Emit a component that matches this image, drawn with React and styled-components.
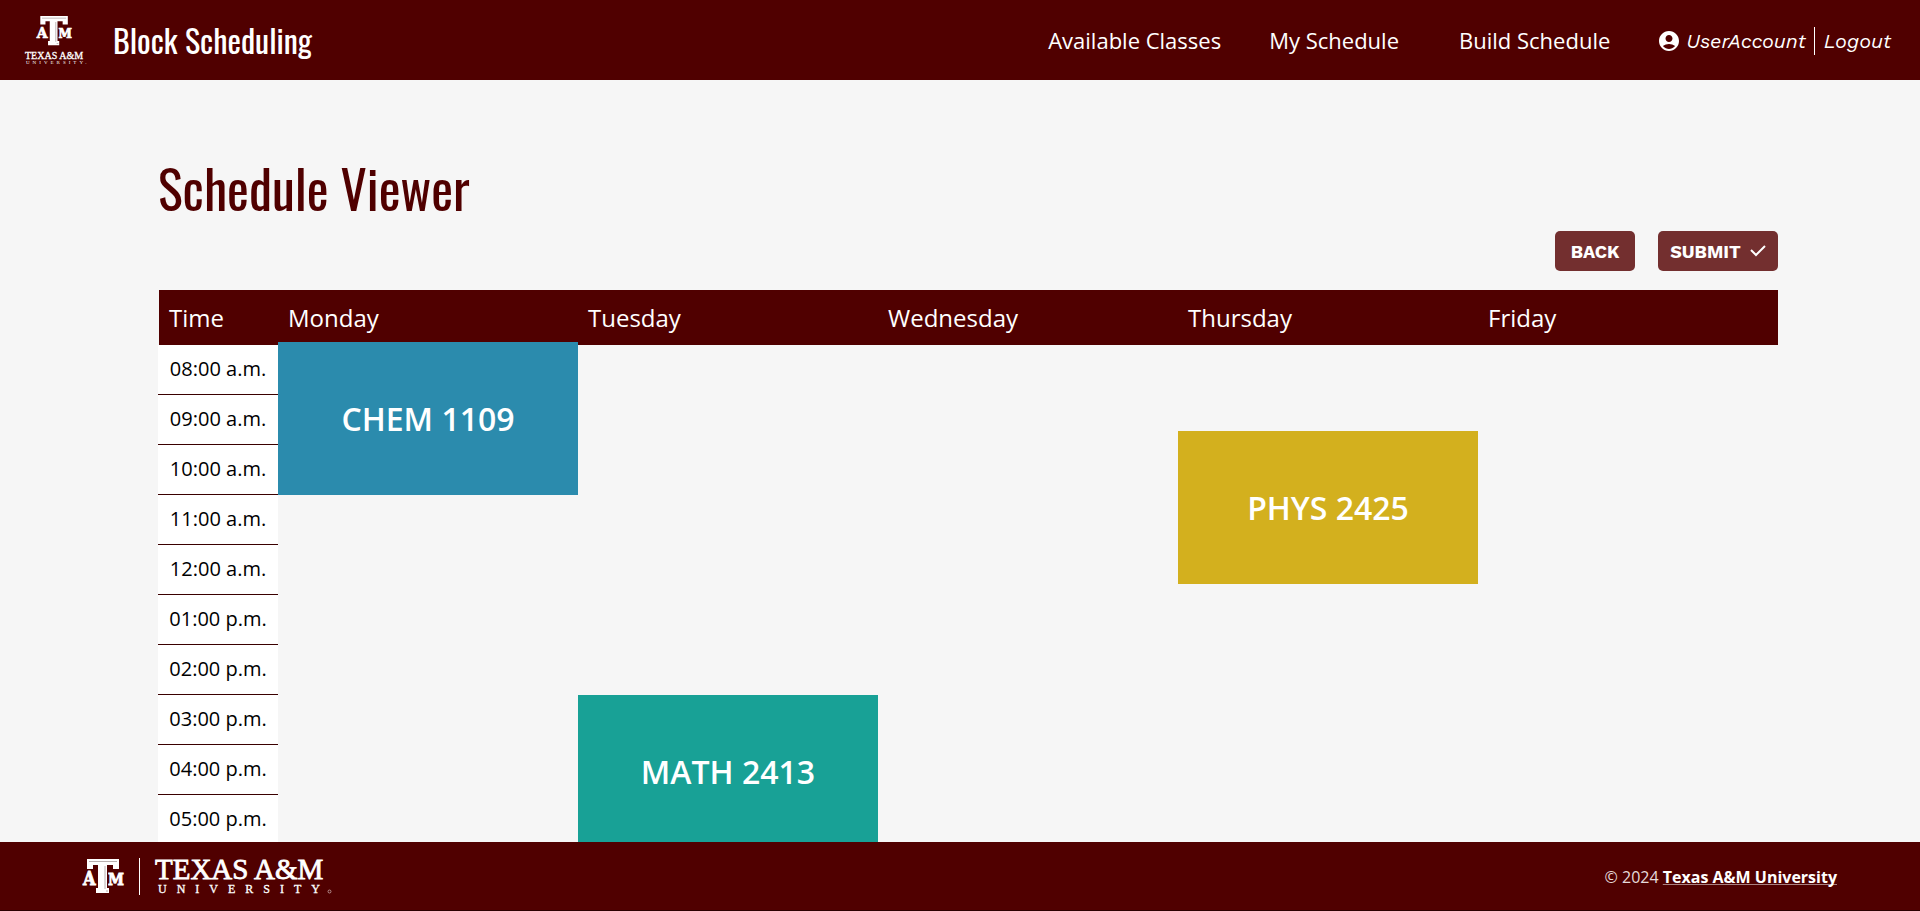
import React from "react";
import styled, { createGlobalStyle } from "styled-components";
import { MdAccountCircle } from "react-icons/md";

const maroon = "#500000";
const sans = '"Open Sans", "Noto Sans", sans-serif';
const condensed = 'Oswald, "Roboto Condensed", "Liberation Sans Narrow", sans-serif';
const grotesk = '"Work Sans", Inter, sans-serif';

const GlobalStyle = createGlobalStyle`
  *, *::before, *::after { box-sizing: border-box; }
  body { margin: 0; background: #f6f6f6; font-family: ${sans}; }
`;

const Page = styled.div`
  display: flex;
  flex-direction: column;
  height: 100vh;
  overflow: hidden;
`;

const Header = styled.header`
  flex: none;
  display: flex;
  align-items: center;
  height: 80px;
  padding: 0 29px 0 24px;
  background: ${maroon};
  color: #fff;
`;

const HeaderLogo = styled.svg`
  flex: none;
  display: block;
  width: 72px;
  height: 56px;
  overflow: visible;
`;

const SiteTitle = styled.div`
  margin-left: 17px;
  font-family: ${condensed};
  font-size: 32px;
  line-height: 48px;
  white-space: nowrap;
`;

const Nav = styled.nav`
  display: flex;
  align-items: center;
  margin-left: auto;
  white-space: nowrap;
`;

const NavLink = styled.a`
  margin-right: ${(p) => p.$gap}px;
  color: #fff;
  font-size: 22px;
  line-height: 32px;
  text-decoration: none;
`;

const Account = styled.div`
  display: flex;
  align-items: center;
  padding-top: 2px;
  font-family: ${grotesk};
  font-size: 20px;
  font-style: italic;
  line-height: 28px;

  svg { margin-right: 5px; }
`;

const AccountLink = styled.a`
  color: #fff;
  text-decoration: none;

  & + & {
    margin-left: 8px;
    padding-left: 9px;
    border-left: 1px solid #fff;
  }
`;

const Main = styled.main`
  flex: 1;
  min-height: 0;
  overflow-y: auto;
  scrollbar-width: none;
  padding: 68px 142px 0 158px;
`;

const PageTitle = styled.h1`
  margin: 0;
  color: ${maroon};
  font-family: ${condensed};
  font-size: 52px;
  font-weight: 400;
  line-height: 80px;
`;

const Actions = styled.div`
  display: flex;
  justify-content: flex-end;
  gap: 23px;
  margin: 3px 0 19px;
`;

const Button = styled.button`
  display: flex;
  align-items: center;
  justify-content: center;
  gap: 9px;
  width: ${(p) => p.$width}px;
  height: 40px;
  padding: 0;
  border: 0;
  border-radius: 5px;
  background: #732f2f;
  color: #fff;
  font-family: ${grotesk};
  font-size: 18px;
  font-weight: 700;
`;

const Table = styled.table`
  width: 100%;
  table-layout: fixed;
  border-collapse: separate;
  border-spacing: 0;
`;

const HeadCell = styled.th`
  width: ${(p) => (p.$narrow ? "120px" : "auto")};
  height: 55px;
  padding: 0 10px;
  border-left: ${(p) => (p.$narrow ? "1px solid #f6f6f6" : "0")};
  background: ${maroon};
  color: #fff;
  font-size: 24px;
  font-weight: 400;
  line-height: 32px;
  text-align: left;
`;

const TimeCell = styled.th`
  height: 50px;
  padding: 0 0 2px;
  border-bottom: 1px solid #3a0000;
  background: #fff;
  color: #000;
  font-size: 20px;
  font-weight: 400;
  line-height: 28px;
  text-align: center;
`;

const SlotCell = styled.td`
  position: relative;
  padding: 0;
`;

const Course = styled.div`
  position: absolute;
  top: ${(p) => p.$offset}px;
  left: 0;
  z-index: 1;
  display: flex;
  align-items: center;
  justify-content: center;
  width: 100%;
  height: 153px;
  background: ${(p) => p.$color};
  color: #fff;
  font-size: 32px;
  font-weight: 600;
`;

const Footer = styled.footer`
  position: relative;
  z-index: 2;
  flex: none;
  display: flex;
  align-items: center;
  justify-content: space-between;
  height: 69px;
  padding: 0 83px 0 80px;
  border-bottom: 1px solid #2b0000;
  background: ${maroon};
  color: #fff;
`;

const FooterLogo = styled.svg`
  display: block;
  width: 270px;
  height: 60px;
`;

const Copyright = styled.p`
  margin: 0;
  padding-top: 1px;
  color: #e6dada;
  font-size: 16px;
  line-height: 24px;
`;

const FooterLink = styled.a`
  color: #fff;
  font-weight: 700;
  text-decoration: underline;
  text-decoration-color: #a98080;
  text-decoration-thickness: 1px;
  text-decoration-skip-ink: none;
`;

function Monogram() {
  return (
    <g fill="#fff">
      <g fontFamily='"DejaVu Serif Condensed", "DejaVu Serif", serif' fontWeight="700" stroke="#fff" strokeWidth="0.8">
        <text x="1" y="26" fontSize="18">A</text>
        <text x="26" y="26" fontSize="16">M</text>
      </g>
      <path
        d="M5 0H37V10H31V6H25V29H27V34H14V29H16V6H11V10H5Z"
        stroke={maroon}
        strokeWidth="2"
        paintOrder="stroke"
      />
      <path d="M7 2.500H35M23 7V30M24 32H26" stroke="#b9b0b0" strokeWidth="1" fill="none" />
    </g>
  );
}

const days = ["Monday", "Tuesday", "Wednesday", "Thursday", "Friday"];

const hours = [
  "08:00 a.m.", "09:00 a.m.", "10:00 a.m.", "11:00 a.m.", "12:00 a.m.",
  "01:00 p.m.", "02:00 p.m.", "03:00 p.m.", "04:00 p.m.", "05:00 p.m.",
];

const courses = [
  { name: "CHEM 1109", day: "Monday", hour: "08:00 a.m.", offset: -3, color: "#2b8bad" },
  { name: "PHYS 2425", day: "Thursday", hour: "09:00 a.m.", offset: 36, color: "#d3b01e" },
  { name: "MATH 2413", day: "Tuesday", hour: "03:00 p.m.", offset: 0, color: "#18a196" },
];

export default function App() {
  return (
    <Page>
      <GlobalStyle />
      <Header>
        <HeaderLogo viewBox="0 0 72 56" role="img" aria-label="Texas A&M University">
          <g transform="translate(12 4) scale(0.86)"><Monogram /></g>
          <g fill="#fff" fontFamily='"Liberation Serif", serif'>
            <text x="1" y="47" fontSize="10" stroke="#fff" strokeWidth="0.3">TEXAS A&amp;M</text>
            <text x="2" y="52" fontSize="5" letterSpacing="3">UNIVERSITY.</text>
          </g>
        </HeaderLogo>
        <SiteTitle>Block Scheduling</SiteTitle>
        <Nav>
          <NavLink href="#classes" $gap={48}>Available Classes</NavLink>
          <NavLink href="#schedule" $gap={60}>My Schedule</NavLink>
          <NavLink href="#build" $gap={47}>Build Schedule</NavLink>
          <Account>
            <MdAccountCircle size={24} />
            <AccountLink href="#account">UserAccount</AccountLink>
            <AccountLink href="#logout">Logout</AccountLink>
          </Account>
        </Nav>
      </Header>
      <Main>
        <PageTitle>Schedule Viewer</PageTitle>
        <Actions>
          <Button type="button" $width={80}>BACK</Button>
          <Button type="button" $width={120}>
            SUBMIT
            <svg width="16" height="12" viewBox="0 0 16 12" fill="none" stroke="#fff" strokeWidth="2" aria-hidden="true">
              <path d="M1 5L6 10L15 1" />
            </svg>
          </Button>
        </Actions>
        <Table>
          <thead>
            <tr>
              <HeadCell scope="col" $narrow>Time</HeadCell>
              {days.map((day) => <HeadCell scope="col" key={day}>{day}</HeadCell>)}
            </tr>
          </thead>
          <tbody>
            {hours.map((hour) => (
              <tr key={hour}>
                <TimeCell scope="row">{hour}</TimeCell>
                {days.map((day) => {
                  const course = courses.find((c) => c.day === day && c.hour === hour);
                  return (
                    <SlotCell key={day}>
                      {course && <Course $offset={course.offset} $color={course.color}>{course.name}</Course>}
                    </SlotCell>
                  );
                })}
              </tr>
            ))}
          </tbody>
        </Table>
      </Main>
      <Footer>
        <FooterLogo viewBox="0 0 270 60" role="img" aria-label="Texas A&M University">
          <g transform="translate(2 13)"><Monogram /></g>
          <path d="M59.500 12V49" stroke="#fff" strokeWidth="1" />
          <g fill="#fff" fontFamily='"Liberation Serif", serif'>
            <text x="75" y="33" fontSize="29" stroke="#fff" strokeWidth="0.8">TEXAS A&amp;M</text>
            <text x="78" y="47" fontSize="12" letterSpacing="10" stroke="#fff" strokeWidth="0.3">UNIVERSITY</text>
          </g>
          <circle cx="249.500" cy="45.500" r="1.500" stroke="#fff" strokeWidth="0.500" fill="none" />
        </FooterLogo>
        <Copyright>© 2024 <FooterLink href="#tamu">Texas A&amp;M University</FooterLink></Copyright>
      </Footer>
    </Page>
  );
}
